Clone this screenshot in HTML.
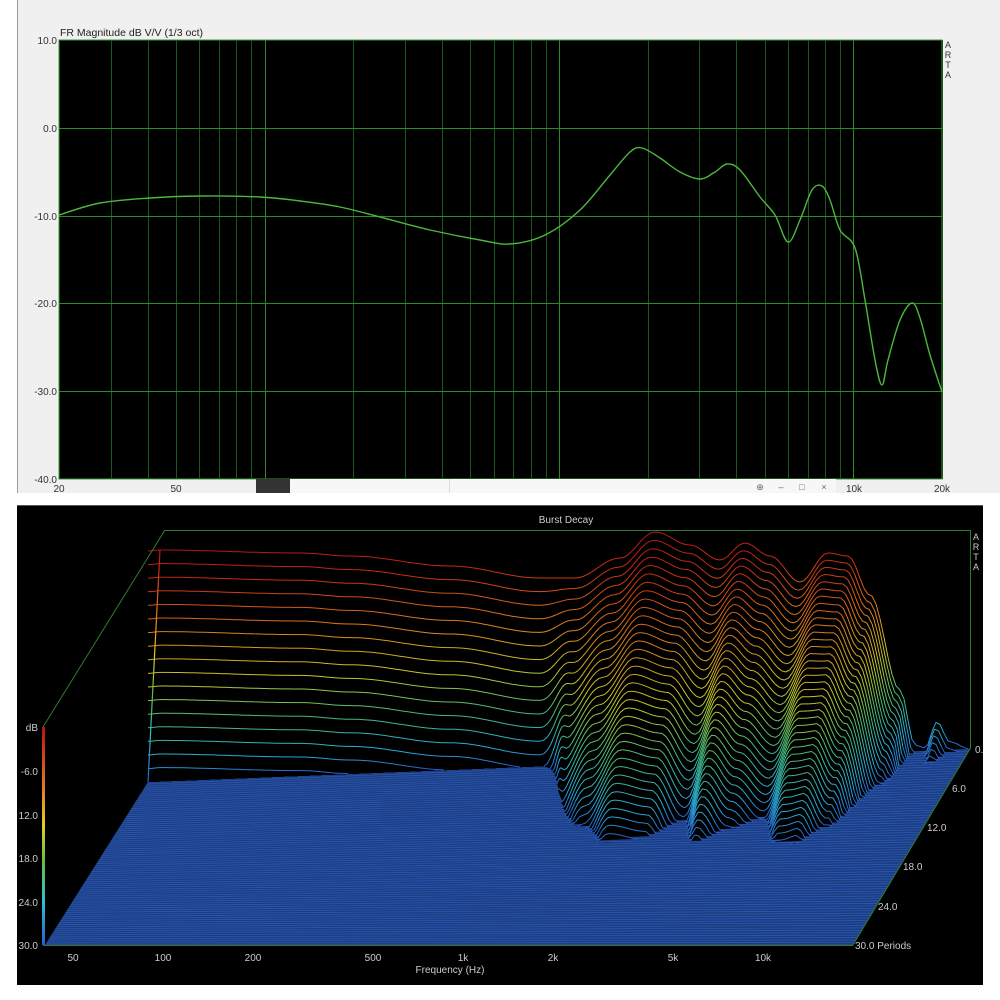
<!DOCTYPE html>
<html><head><meta charset="utf-8"><style>
html,body{margin:0;padding:0;background:#fff;width:1000px;height:1000px;overflow:hidden;font-family:"Liberation Sans",sans-serif}
svg{position:absolute;left:0;top:0}
</style></head><body>
<svg id="s" width="1000" height="1000" xmlns="http://www.w3.org/2000/svg">
<rect x="17" y="0" width="983" height="493" fill="#f0f0f0"/>
<line x1="17.5" y1="0" x2="17.5" y2="493" stroke="#999"/>
<rect x="59" y="40" width="883" height="439" fill="#000" stroke="#3a9a3a" stroke-width="1"/>
<g id="topgrid"></g>
<path id="fr" fill="none" stroke="#4cb83c" stroke-width="1.4"/>
<text x="60" y="36" font-size="10.5" fill="#222">FR Magnitude dB V/V (1/3 oct)</text>
<g font-size="10" fill="#333" text-anchor="end">
<text x="57" y="44">10.0</text><text x="57" y="132">0.0</text><text x="57" y="220">-10.0</text>
<text x="57" y="307">-20.0</text><text x="57" y="395">-30.0</text><text x="57" y="483">-40.0</text>
</g>
<g font-size="10" fill="#333" text-anchor="middle">
<text x="59" y="492">20</text><text x="176" y="492">50</text><text x="854" y="492">10k</text><text x="942" y="492">20k</text>
</g>
<g font-size="9" fill="#333" text-anchor="middle"><text x="948" y="48">A</text><text x="948" y="58">R</text><text x="948" y="68">T</text><text x="948" y="78">A</text></g>
<rect x="256" y="479" width="34" height="14" fill="#333"/>
<rect x="290" y="479" width="546" height="14" fill="#f7f7f7"/>
<line x1="449.5" y1="479" x2="449.5" y2="493" stroke="#ddd"/>
<g font-size="9" fill="#666" text-anchor="middle"><text x="760" y="490">⊕</text><text x="781" y="490">–</text><text x="802" y="490">□</text><text x="824" y="490">×</text></g>
<rect x="17" y="505" width="966" height="480" fill="#000"/>
<line x1="17" y1="505.5" x2="983" y2="505.5" stroke="#555"/>
<text x="566" y="523" font-size="10" fill="#ccc" text-anchor="middle">Burst Decay</text>
<g id="wf"></g>
<g stroke="#2f7a2f" fill="none" stroke-width="1">
<line x1="165" y1="530.5" x2="970" y2="530.5"/>
<line x1="970.5" y1="530" x2="970.5" y2="749"/>
<line x1="165" y1="530" x2="43" y2="727"/>
<line x1="970" y1="749" x2="853" y2="945"/>
<line x1="43" y1="945.5" x2="853" y2="945.5"/>
</g>
<defs><linearGradient id="cb" x1="0" y1="0" x2="0" y2="1">
<stop offset="0" stop-color="#c01010"/><stop offset="0.25" stop-color="#e07020"/><stop offset="0.45" stop-color="#e0d020"/><stop offset="0.62" stop-color="#60c040"/><stop offset="0.8" stop-color="#30c0d0"/><stop offset="1" stop-color="#2060d0"/></linearGradient></defs>
<rect x="42" y="727" width="3" height="218" fill="url(#cb)"/>
<g font-size="10" fill="#ccc" text-anchor="end">
<text x="38" y="731">dB</text><text x="38" y="775">-6.0</text><text x="38" y="819">12.0</text><text x="38" y="862">18.0</text><text x="38" y="906">24.0</text><text x="38" y="949">30.0</text>
</g>
<g font-size="10" fill="#ccc" text-anchor="middle">
<text x="73" y="961">50</text><text x="163" y="961">100</text><text x="253" y="961">200</text><text x="373" y="961">500</text><text x="463" y="961">1k</text><text x="553" y="961">2k</text><text x="673" y="961">5k</text><text x="763" y="961">10k</text>
<text x="450" y="973">Frequency (Hz)</text>
</g>
<g font-size="10" fill="#ccc">
<text x="975" y="753">0.</text><text x="952" y="792">6.0</text><text x="927" y="831">12.0</text><text x="903" y="870">18.0</text><text x="878" y="910">24.0</text><text x="855" y="949">30.0 Periods</text>
</g>
<g font-size="9" fill="#ccc" text-anchor="middle"><text x="976" y="540">A</text><text x="976" y="550">R</text><text x="976" y="560">T</text><text x="976" y="570">A</text></g>
</svg>
<script>
var NS="http://www.w3.org/2000/svg";
function el(t,a,p){var e=document.createElementNS(NS,t);for(var k in a)e.setAttribute(k,a[k]);(p||document.getElementById('s')).appendChild(e);return e;}
var tg=document.getElementById('topgrid');
function fx(f){return 59+294.33*Math.log10(f/20);}
[20,30,40,50,60,70,80,90,100,200,300,400,500,600,700,800,900,1000,2000,3000,4000,5000,6000,7000,8000,9000,10000,20000].forEach(function(f){
 var b=(f==100||f==1000||f==10000);var x=Math.round(fx(f))+0.5;
 el('line',{x1:x,y1:40,x2:x,y2:479,stroke:b?'#2a8a2a':'#175a17','stroke-width':1},tg);});
[128,216,303,391].forEach(function(y){el('line',{x1:59,y1:y+.5,x2:942,y2:y+.5,stroke:'#2a8a2a'},tg);});
var pts=[[59,215],[100,203],[150,198],[200,196],[260,197],[300,201],[340,207],[380,217],[430,230],[480,240],[510,244],[545,235],[580,210],[610,175],[630,152],[642,148],[660,158],[680,172],[700,179],[715,172],[727,164],[740,170],[760,197],[775,215],[788,242],[800,220],[812,190],[822,186],[830,200],[840,230],[855,248],[865,300],[875,360],[882,385],[888,360],[900,320],[912,303],[920,318],[930,355],[942,392]];
function smooth(p){var d='M'+p[0][0]+','+p[0][1];for(var i=0;i<p.length-1;i++){var p0=p[i-1]||p[i],p1=p[i],p2=p[i+1],p3=p[i+2]||p2;
 d+=' C'+(p1[0]+(p2[0]-p0[0])/6).toFixed(1)+','+(p1[1]+(p2[1]-p0[1])/6).toFixed(1)+' '+(p2[0]-(p3[0]-p1[0])/6).toFixed(1)+','+(p2[1]-(p3[1]-p1[1])/6).toFixed(1)+' '+p2[0]+','+p2[1];}return d;}
document.getElementById('fr').setAttribute('d',smooth(pts));
var wf=document.getElementById('wf');
function interp(a,x){if(x<=a[0][0])return a[0][1];for(var i=0;i<a.length-1;i++){if(x<=a[i+1][0]){var t=(x-a[i][0])/(a[i+1][0]-a[i][0]);t=(1-Math.cos(Math.PI*t))/2;return a[i][1]+t*(a[i+1][1]-a[i][1]);}}return a[a.length-1][1];}
var top0=[[148,551],[160,550],[300,553],[350,556],[450,566],[540,578],[575,578],[620,558],[655,532],[690,545],[720,560],[745,543],[770,556],[800,582],[828,553],[848,556],[870,595],[900,690],[915,745],[925,748],[937,722],[950,742],[970,749]];
var decay=[[148,13.6],[540,13.6],[580,9],[620,7],[655,6.2],[690,6],[720,7],[745,5.5],[770,6],[800,6],[830,5],[850,4.8],[880,4.5],[905,4],[915,6],[937,4.5],[970,5]];
var wgt=[[148,0],[540,0],[600,1],[970,1]];
function by(x){return 782-33*(x-148)/822;}
function col(h){var s=[[0,[40,90,200]],[20,[40,170,220]],[60,[70,190,120]],[100,[200,200,40]],[150,[220,120,30]],[200,[200,40,20]],[240,[170,20,20]]];
 for(var i=0;i<s.length-1;i++){if(h<=s[i+1][0]){var t=(h-s[i][0])/(s[i+1][0]-s[i][0]);var c=s[i][1],d=s[i+1][1];return 'rgb('+[0,1,2].map(function(k){return Math.round(c[k]+t*(d[k]-c[k]))}).join(',')+')';}}return 'rgb(170,20,20)';}
el('polygon',{points:'148,782 970,749 853,945 45,945',fill:'#1c3d82'},wf);
for(var j=0;j<=80;j++){var t=j/80;var x1=148+(45-148)*t,y1=782+(945-782)*t,x2=970+(853-970)*t,y2=749+(945-749)*t;
 el('line',{x1:x1,y1:y1,x2:x2,y2:y2,stroke:'#2d5cb8','stroke-width':0.7},wf);}
var N=90,dx=-117/N,dy=196/N;
for(var i=0;i<N;i++){
 var P=[],B=[];
 for(var x=148;x<=970;x+=4){var w=interp(wgt,x);var bx=x+w*i*dx,byy=by(x)+w*i*dy;
  var H=by(x)-interp(top0,x);var h=Math.max(0,H-interp(decay,x)*i);
  P.push([bx,byy-h,h]);B.push([bx,byy]);}
 var any=P.some(function(p){return p[2]>0.5});if(!any)continue;
 var pp=P.map(function(p){return p[0].toFixed(1)+','+p[1].toFixed(1)}).join(' ')+' '+B.slice().reverse().map(function(p){return p[0].toFixed(1)+','+p[1].toFixed(1)}).join(' ');
 el('polygon',{points:pp,fill:'#000'},wf);
 for(var k=0;k<P.length-1;k++){var a=P[k],b=P[k+1];var h=(a[2]+b[2])/2;
  if(a[2]<0.5&&b[2]<0.5)continue;
  el('line',{x1:a[0].toFixed(1),y1:a[1].toFixed(1),x2:b[0].toFixed(1),y2:b[1].toFixed(1),stroke:col(h),'stroke-width':1},wf);}
}
el('line',{x1:148,y1:782,x2:160,y2:550,stroke:'url(#cb)','stroke-width':1.2},wf);
</script>
</body></html>
